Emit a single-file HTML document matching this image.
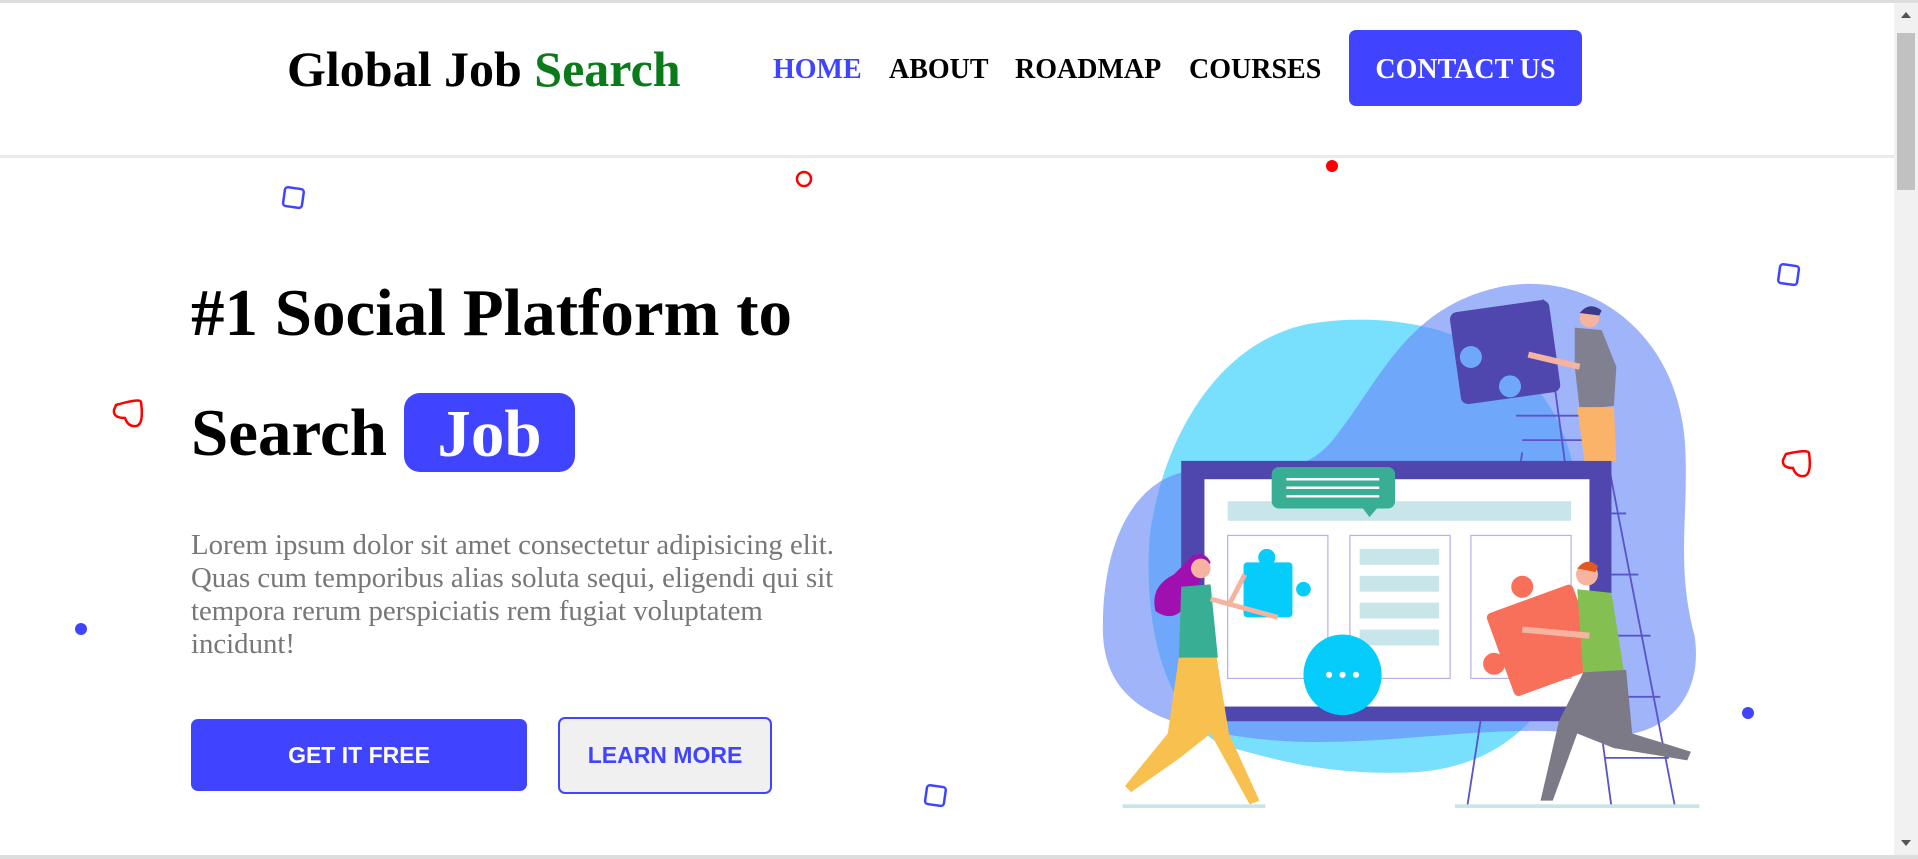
<!DOCTYPE html>
<html><head><meta charset="utf-8"><style>
*{margin:0;padding:0;box-sizing:border-box}
body{width:1918px;height:859px;overflow:hidden;background:#fff;position:relative;font-family:"Liberation Serif",serif}
.a{position:absolute;white-space:nowrap}
.nav{font-weight:bold;font-size:28px;top:54px;color:#000}
.p{font-size:28.8px;color:#777;left:191px}
</style></head><body>
<div class="a" style="left:0;top:0;width:1918px;height:3px;background:#ddd"></div>
<div class="a" style="left:0;top:155px;width:1894px;height:3px;background:#eee8e8"></div>
<div class="a" style="left:0;top:855px;width:1918px;height:4px;background:#ddd"></div>
<div class="a" style="left:1894px;top:3px;width:24px;height:852px;background:#f1f1f1"></div>
<div class="a" style="left:1897px;top:33px;width:18px;height:157px;background:#c1c1c1"></div>
<div class="a" style="left:1901px;top:12px;width:0;height:0;border-left:5px solid transparent;border-right:5px solid transparent;border-bottom:6px solid #555"></div>
<div class="a" style="left:1901px;top:840px;width:0;height:0;border-left:5px solid transparent;border-right:5px solid transparent;border-top:6px solid #555"></div>

<div class="a" style="left:287px;top:40px;font-size:50px;font-weight:bold">Global Job <span style="color:#0a7a1a">Search</span></div>
<div class="a nav" style="left:773px;color:#4044ff">HOME</div>
<div class="a nav" style="left:889px">ABOUT</div>
<div class="a nav" style="left:1015px">ROADMAP</div>
<div class="a nav" style="left:1189px">COURSES</div>
<div class="a" style="left:1349px;top:30px;width:233px;height:76px;background:#4044ff;border-radius:7px;color:#fff;font-weight:bold;font-size:28px;text-align:center;line-height:80px">CONTACT US</div>

<div class="a" style="left:191px;top:263px;font-size:67px;font-weight:bold;line-height:100px">#1 Social Platform to</div>
<div class="a" style="left:191px;top:383px;font-size:67px;font-weight:bold;line-height:100px">Search</div>
<div class="a" style="left:404px;top:393px;width:171px;height:79px;background:#4044ff;border-radius:16px;color:#fff;font-size:67px;font-weight:bold;text-align:center;line-height:82px">Job</div>

<div class="a p" style="top:529px">Lorem ipsum dolor sit amet consectetur adipisicing elit.</div>
<div class="a p" style="top:562px">Quas cum temporibus alias soluta sequi, eligendi qui sit</div>
<div class="a p" style="top:595px">tempora rerum perspiciatis rem fugiat voluptatem</div>
<div class="a p" style="top:628px">incidunt!</div>

<div class="a" style="left:191px;top:719px;width:336px;height:72px;background:#4044ff;border-radius:7px;color:#fff;font-family:'Liberation Sans',sans-serif;font-weight:bold;font-size:23px;text-align:center;line-height:72px">GET IT FREE</div>
<div class="a" style="left:558px;top:717px;width:214px;height:77px;background:#f0f0f0;border:2.5px solid #4044ff;border-radius:7px;color:#4044ff;font-family:'Liberation Sans',sans-serif;font-weight:bold;font-size:23px;text-align:center;line-height:72px">LEARN MORE</div>

<svg class="a" style="left:0;top:0" width="1918" height="859">
<rect x="284" y="188" width="19" height="19" rx="3" fill="none" stroke="#4044ff" stroke-width="2.5" transform="rotate(8 293 197)"/>
<circle cx="804" cy="179" r="7" fill="none" stroke="red" stroke-width="2.5"/>
<circle cx="1332" cy="166" r="6" fill="red"/>
<circle cx="81" cy="629" r="6" fill="#4044ff"/>
<rect x="1779" y="265" width="19" height="19" rx="3" fill="none" stroke="#4044ff" stroke-width="2.5" transform="rotate(8 1788 275)"/>
<circle cx="1748" cy="713" r="6" fill="#4044ff"/>
<rect x="926" y="786" width="19" height="19" rx="3" fill="none" stroke="#4044ff" stroke-width="2.5" transform="rotate(8 935 795)"/>
<path d="M116 405 Q140 398 141 402 Q144 425 136 426 Q128 427 125 418 Q113 418 114 410 Z" fill="none" stroke="red" stroke-width="2.5"/>
<path d="M1786 454 Q1808 449 1809 453 Q1812 475 1804 476 Q1796 477 1793 468 Q1782 468 1783 460 Z" fill="none" stroke="red" stroke-width="2.5"/>
</svg>

<svg class="a" style="left:1076px;top:269px" width="648" height="550" viewBox="880 220 530 450">
<defs><clipPath id="cy"><path d="M1000 610 C955 585 935 520 940 440 C950 360 995 280 1070 265 C1130 255 1200 265 1250 310 C1290 350 1300 420 1290 500 C1280 580 1230 630 1150 632 C1080 634 1040 620 1000 610Z"/></clipPath></defs>
<path d="M902 520 C900 440 930 390 975 385 C1030 380 1060 395 1090 360 C1130 310 1150 250 1230 234 C1300 222 1370 270 1378 360 C1382 420 1370 460 1386 520 C1395 580 1350 610 1300 600 C1200 590 1100 620 1000 600 C940 590 905 570 902 520Z" fill="#a0b4fa"/>
<path d="M1000 610 C955 585 935 520 940 440 C950 360 995 280 1070 265 C1130 255 1200 265 1250 310 C1290 350 1300 420 1290 500 C1280 580 1230 630 1150 632 C1080 634 1040 620 1000 610Z" fill="#78e0fd"/>
<path d="M902 520 C900 440 930 390 975 385 C1030 380 1060 395 1090 360 C1130 310 1150 250 1230 234 C1300 222 1370 270 1378 360 C1382 420 1370 460 1386 520 C1395 580 1350 610 1300 600 C1200 590 1100 620 1000 600 C940 590 905 570 902 520Z" fill="#6fa8fa" clip-path="url(#cy)"/>
<g stroke="#5a54c8" stroke-width="1.5" fill="none">
<line x1="1262" y1="245" x2="1318" y2="660"/><line x1="1300" y1="300" x2="1370" y2="660"/>
<line x1="1245" y1="370" x2="1200" y2="660"/>
<line x1="1290" y1="420" x2="1330" y2="420"/><line x1="1297" y1="470" x2="1340" y2="470"/><line x1="1303" y1="520" x2="1350" y2="520"/><line x1="1308" y1="570" x2="1358" y2="570"/><line x1="1313" y1="620" x2="1365" y2="620"/>
<line x1="1240" y1="340" x2="1310" y2="340"/><line x1="1245" y1="360" x2="1310" y2="360"/>
</g>
<rect x="966" y="377" width="352" height="213" fill="#4f46ae"/>
<rect x="985" y="392" width="315" height="186" fill="#fff"/>
<rect x="1004" y="410" width="281" height="16" fill="#c8e6ea"/>
<g fill="none" stroke="#b5b0e6" stroke-width="1"><rect x="1004" y="438" width="82" height="117"/><rect x="1104" y="438" width="82" height="117"/><rect x="1203" y="438" width="82" height="117"/></g>
<g fill="#c8e6ea"><rect x="1112" y="449" width="65" height="13"/><rect x="1112" y="471" width="65" height="13"/><rect x="1112" y="493" width="65" height="13"/><rect x="1112" y="515" width="65" height="13"/></g>
<rect x="1040" y="382" width="101" height="34" rx="6" fill="#38ae94"/><path d="M1114 415 L1120 423 L1127 415Z" fill="#38ae94"/>
<g stroke="#fff" stroke-width="2"><line x1="1052" y1="392" x2="1128" y2="392"/><line x1="1052" y1="399" x2="1128" y2="399"/><line x1="1052" y1="406" x2="1128" y2="406"/></g>
<ellipse cx="1098" cy="552" rx="32" ry="33" fill="#06ccfc"/>
<g fill="#fff"><circle cx="1087" cy="552" r="2.5"/><circle cx="1098" cy="552" r="2.5"/><circle cx="1109" cy="552" r="2.5"/></g>
<rect x="1017" y="460" width="40" height="45" rx="3" fill="#06ccfc"/><circle cx="1036" cy="456" r="7" fill="#06ccfc"/><circle cx="1066" cy="482" r="6" fill="#06ccfc"/>
<rect x="1190" y="250" width="82" height="76" rx="6" fill="#4f46ae" transform="rotate(-8 1231 288)"/>
<circle cx="1203" cy="292" r="9" fill="#6fa8fa"/><circle cx="1235" cy="316" r="9" fill="#6fa8fa"/>
<rect x="1225" y="488" width="75" height="72" rx="4" fill="#f87059" transform="rotate(-20 1262 524)"/>
<circle cx="1245" cy="480" r="9" fill="#f87059"/><circle cx="1222" cy="543" r="9" fill="#f87059"/>
<path d="M1288 268 L1310 270 L1322 300 L1320 332 L1292 335 L1288 300Z" fill="#808090"/>
<path d="M1290 333 L1320 333 L1322 377 L1296 377Z" fill="#fbb36a"/>
<circle cx="1300" cy="260" r="8" fill="#f5b3a0"/><path d="M1292 256 Q1300 246 1310 254 L1308 258Z" fill="#3a3a8a"/>
<path d="M1250 290 L1292 300" stroke="#f5b3a0" stroke-width="5"/>
<path d="M960 470 Q940 480 945 500 Q960 510 970 495 L990 460 Q985 450 975 455Z" fill="#a010b0"/>
<circle cx="982" cy="465" r="8" fill="#f5b3a0"/>
<path d="M966 480 L990 478 L996 538 L964 540Z" fill="#38ae94"/>
<path d="M964 538 L995 538 L1005 600 L1030 655 L1022 658 L990 600 L965 620 L925 648 L920 643 L955 600Z" fill="#f8c04f"/>
<path d="M990 490 L1045 505" stroke="#f5b3a0" stroke-width="4"/><path d="M1005 495 L1018 470" stroke="#f5b3a0" stroke-width="4"/>
<circle cx="1298" cy="470" r="9" fill="#f5b3a0"/><path d="M1290 465 Q1298 455 1307 463 L1305 468Z" fill="#e05a20"/>
<path d="M1290 482 L1318 485 L1328 548 L1295 552Z" fill="#83bf51"/>
<path d="M1295 550 L1330 548 L1335 600 L1383 615 L1380 622 L1320 612 L1290 600 L1270 655 L1260 655 L1275 590Z" fill="#7d7a88"/>
<path d="M1245 515 L1300 520" stroke="#f5b3a0" stroke-width="5"/>
<g fill="#c8e6ea"><rect x="918" y="658" width="117" height="3"/><rect x="1190" y="658" width="200" height="3"/></g>
</svg>
</body></html>
